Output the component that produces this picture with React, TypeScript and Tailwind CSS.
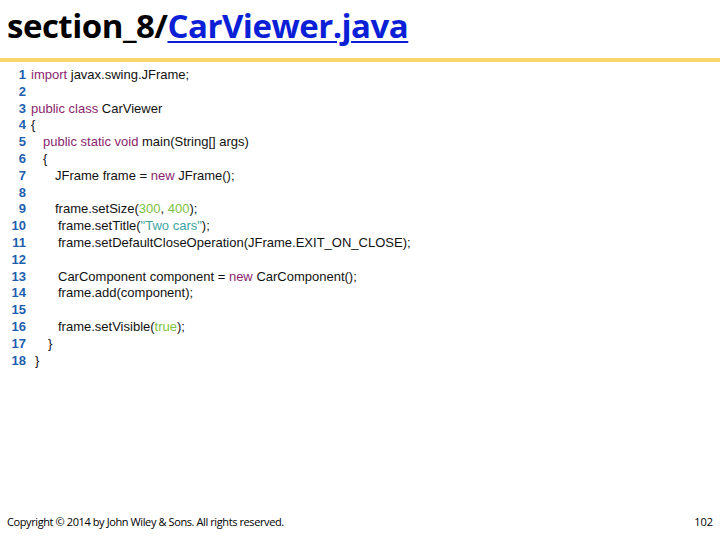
import React from "react";

const K = "text-[#8b1f6e]";
const N = "text-[#7cc242]";
const S = "text-[#3aa6a0]";

type Seg = [string, string?];
const lines: { pad: number; segs: Seg[] }[] = [
  { pad: 0, segs: [["import", K], [" javax.swing.JFrame;"]] },
  { pad: 0, segs: [] },
  { pad: 0, segs: [["public class", K], [" CarViewer"]] },
  { pad: 0, segs: [["{"]] },
  { pad: 12, segs: [["public static void", K], [" main(String[] args)"]] },
  { pad: 12, segs: [["{"]] },
  { pad: 24, segs: [["JFrame frame = "], ["new", K], [" JFrame();"]] },
  { pad: 0, segs: [] },
  { pad: 24, segs: [["frame.setSize("], ["300", N], [", "], ["400", N], [");"]] },
  { pad: 27, segs: [["frame.setTitle("], ['"Two cars"', S], [");"]] },
  { pad: 27, segs: [["frame.setDefaultCloseOperation(JFrame.EXIT_ON_CLOSE);"]] },
  { pad: 0, segs: [] },
  { pad: 27, segs: [["CarComponent component = "], ["new", K], [" CarComponent();"]] },
  { pad: 27, segs: [["frame.add(component);"]] },
  { pad: 0, segs: [] },
  { pad: 27, segs: [["frame.setVisible("], ["true", N], [");"]] },
  { pad: 17, segs: [["}"]] },
  { pad: 4, segs: [["}"]] },
];

export default function App() {
  return (
    <div className="w-[720px] h-[540px] bg-white relative overflow-hidden flex flex-col">
      <div className="h-[58px] pl-[7px] pt-[4px] text-[33px] font-bold leading-[44px] text-black tracking-[-0.5px]" style={{ fontFamily: "'Open Sans', sans-serif" }}>
        section_8/<span className="text-[#0a1fd6] underline decoration-2 underline-offset-[3px]">CarViewer.java</span>
      </div>
      <div className="h-[4px] bg-[#f8d66e]"></div>
      <div className="pt-[5px] flex flex-col" style={{ fontFamily: "'Liberation Sans', Arial, sans-serif" }}>
        {lines.map((l, i) => (
          <div key={i} className="flex h-[16.8px] items-center text-[13px] leading-[16.8px]">
            <span className="w-[27px] text-right font-bold text-[#1f5fae] pr-[1px]">{i + 1}</span>
            <span className="pl-[4px] text-[#111]" style={{ paddingLeft: 4 + l.pad }}>
              {l.segs.map((s, j) => (
                <span key={j} className={s[1] ?? ""}>{s[0]}</span>
              ))}
            </span>
          </div>
        ))}
      </div>
      <div className="absolute left-[7px] right-[7px] bottom-[10px] flex justify-between text-[11px] text-black" style={{ fontFamily: "'Open Sans', sans-serif" }}>
        <span className="tracking-[-0.4px]">Copyright © 2014 by John Wiley &amp; Sons. All rights reserved.</span>
        <span>102</span>
      </div>
    </div>
  );
}
